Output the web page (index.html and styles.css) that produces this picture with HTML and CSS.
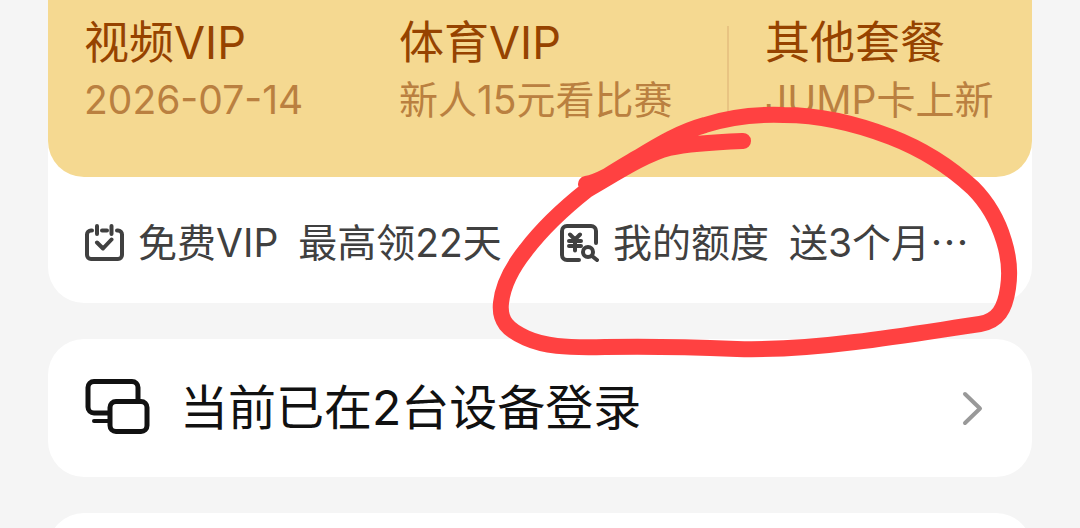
FILE: index.html
```
<!DOCTYPE html>
<html lang="zh-CN">
<head>
  <meta charset="UTF-8">
  <title>会员中心</title>
  <meta name="viewport" content="width=device-width, initial-scale=1">
  <link rel="stylesheet" href="styles.css">
</head>
<body>
  <main class="page">
    <section class="card vip">
      <div class="plans">
        <a class="plan" href="#video">
          <span class="plan-title">视频VIP</span>
          <span class="plan-sub">2026-07-14</span>
        </a>
        <a class="plan" href="#sports">
          <span class="plan-title">体育VIP</span>
          <span class="plan-sub">新人15元看比赛</span>
        </a>
        <span class="divider"></span>
        <a class="plan" href="#others">
          <span class="plan-title">其他套餐</span>
          <span class="plan-sub">JUMP卡上新</span>
        </a>
      </div>
      <nav class="quick">
        <a class="quick-item" href="#free">
          <svg class="quick-icon" viewBox="0 0 40 40" aria-hidden="true">
            <path d="M8 7.500H7a4 4 0 0 0-4 4V32a4 4 0 0 0 4 4h27a4 4 0 0 0 4-4V11.500a4 4 0 0 0-4-4H33M18 7.500h5M13 3v8M27.500 3v8M13 19.500l6 6 8.500-9"/>
          </svg>
          <span>免费VIP</span>
          <span class="quick-note">最高领22天</span>
        </a>
        <a class="quick-item" href="#quota">
          <svg class="quick-icon" viewBox="0 0 40 40" aria-hidden="true">
            <path d="M20 37H8a5 5 0 0 1-5-5V8a5 5 0 0 1 5-5h24a5 5 0 0 1 5 5v12M11 11.500l5 5 5-5M16 16.500v11M10 18h12M10 23h12M33 33l5 4"/>
            <circle cx="29" cy="29" r="5"/>
          </svg>
          <span>我的额度</span>
          <span class="quick-note">送3个月⋯</span>
        </a>
      </nav>
    </section>

    <a class="card device" href="#devices">
      <svg class="device-icon" viewBox="0 0 66 60" aria-hidden="true">
        <path d="M24 35H10a6 6 0 0 1-6-6V9.500a6 6 0 0 1 6-6h38a6 6 0 0 1 6 6V22"/>
        <rect x="26" y="23.500" width="37" height="30" rx="6"/>
        <path class="stand" d="M10 43h14"/>
      </svg>
      <span class="device-text">当前已在2台设备登录</span>
      <svg class="arrow" viewBox="0 0 24 36" aria-hidden="true">
        <path d="M5 4l15 14.500L5 33"/>
      </svg>
    </a>

    <section class="card next"></section>

    <svg class="marker" viewBox="0 0 1080 528" aria-hidden="true">
      <path d="M743 141C718 142 692 143 669 148C645 154 615 174 587 190M586 184C600 182 622 168 637 158C660 144 680 132 705 125C730 117 757 114 784 115C821 115 857 124 891 137C922 149 948 165 973 188C987 202 998 221 1004 241C1009 257 1010 275 1008 288C1005 309 998 321 980 324C939 330 897 337 855 342C815 347 776 350 737 349C690 347 650 346 605 347C564 348 544 346 526 338C508 330 499 321 501 303C503 283 514 265 526 250C542 229 563 209 587 190C604 177 620 168 637 158C652 149 668 142 686 138"/>
    </svg>
  </main>
</body>
</html>
```
FILE: styles.css
```
:root {
  --bg: #f5f5f5;
  --card: #ffffff;
  --gold: #f5d991;
  --brown: #964300;
  --brown-soft: #ba8040;
  --text: #404040;
  --font: Inter, "Noto Sans CJK SC", sans-serif;
}

* {
  box-sizing: border-box;
}

body {
  margin: 0;
  background: var(--bg);
  color: var(--text);
  font-family: var(--font);
}

a {
  color: inherit;
  text-decoration: none;
}

.page {
  position: relative;
  display: flex;
  flex-direction: column;
  gap: 36px;
  min-height: 100vh;
  padding: 0 48px;
  overflow: hidden;
}

.card {
  background: var(--card);
  border-radius: 36px;
}

.vip {
  border-radius: 0 0 36px 36px;
}

.plans {
  display: grid;
  grid-template-columns: 315fr 328fr 2px 267fr;
  padding: 16px 36px 51px;
  background: var(--gold);
  border-radius: 0 0 36px 36px;
}

.plan {
  display: flex;
  flex-direction: column;
  white-space: nowrap;
}

.divider {
  margin: 10px 0;
  background: #e8c482;
}

.divider + .plan {
  padding-left: 36px;
}

.plan-title {
  font-size: 45px;
  line-height: 54px;
  color: var(--brown);
}

.plan-sub {
  margin-top: 4px;
  font-size: 39px;
  line-height: 52px;
  color: var(--brown-soft);
}

.quick {
  display: grid;
  grid-template-columns: 475fr 437fr;
  padding: 39px 36px 33px;
}

.quick-item {
  display: flex;
  align-items: center;
  font-size: 39px;
  line-height: 54px;
  white-space: nowrap;
}

.quick-icon {
  width: 40px;
  height: 40px;
  margin-right: 14px;
  fill: none;
  stroke: var(--text);
  stroke-width: 4;
  stroke-linecap: round;
  stroke-linejoin: round;
}

.quick-note {
  margin-left: 20px;
}

.device {
  display: flex;
  align-items: center;
  padding: 36px;
  color: #111;
}

.device-icon {
  width: 66px;
  height: 60px;
  fill: none;
  stroke: #111;
  stroke-width: 5;
  stroke-linecap: round;
}

.stand {
  stroke-width: 4;
}

.device-text {
  flex: 1;
  margin-left: 30px;
  font-size: 48px;
  line-height: 66px;
}

.arrow {
  width: 24px;
  height: 36px;
  margin-right: 12px;
  fill: none;
  stroke: #999;
  stroke-width: 4;
  stroke-linecap: round;
  stroke-linejoin: round;
}

/* runs on below the fold */
.next {
  flex: 1;
  margin-bottom: -60px;
}

/* hand-drawn circle over the quota entry */
.marker {
  position: absolute;
  top: 0;
  left: 0;
  width: 100%;
  fill: none;
  stroke: #ff4141;
  stroke-width: 16;
  stroke-linecap: round;
  stroke-linejoin: round;
  pointer-events: none;
}
```
